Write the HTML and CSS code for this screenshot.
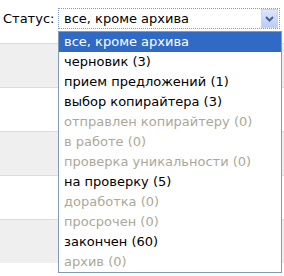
FILE: index.html
```html
<!DOCTYPE html>
<html>
	<head>
		<meta charset="UTF-8">
		<title></title>
		<link rel="stylesheet" href="styles.css">
	</head>
	<body>
		<div id="page">
			<div class="filter">
				<span class="label">Статус:</span>
				<div class="select">
					<span class="value">все, кроме архива</span>
					<span class="arrow">
						<svg width="9" height="6" viewBox="0 0 9 6"><path d="M1 1 L4.5 4.5 L8 1" fill="none" stroke="#4d6185" stroke-width="2"/></svg>
					</span>
				</div>
			</div>
			<div class="rows">
				<div class="row gray"></div>
				<div class="row"></div>
				<div class="row gray"></div>
				<div class="row"></div>
				<div class="row gray"></div>
			</div>
			<ul class="dropdown">
				<li class="on">все, кроме архива</li>
				<li>черновик (3)</li>
				<li>прием предложений (1)</li>
				<li>выбор копирайтера (3)</li>
				<li class="off">отправлен копирайтеру (0)</li>
				<li class="off">в работе (0)</li>
				<li class="off">проверка уникальности (0)</li>
				<li>на проверку (5)</li>
				<li class="off">доработка (0)</li>
				<li class="off">просрочен (0)</li>
				<li>закончен (60)</li>
				<li class="off">архив (0)</li>
			</ul>
		</div>
	</body>
</html>
```

FILE: styles.css
```css
* {margin: 0; padding: 0; border: none;}
ul, li {list-style: none;}
body {
	font-family: "DejaVu Sans", sans-serif;
	font-size: 13px;
	background: #fff;
	color: #000;
}
#page {
	position: relative;
	width: 284px;
	height: 276px;
	overflow: hidden;
}
.filter {
	display: flex;
	align-items: center;
	padding: 7px 0 0 3px;
	height: 23px;
}
.label {
	width: 55px;
}
.select {
	display: flex;
	align-items: center;
	width: 222px;
	height: 21px;
	border: 1px dotted #7f9db9;
	box-sizing: border-box;
	background: #fff;
}
.value {
	flex: 1;
	padding-left: 5px;
}
.arrow {
	display: flex;
	align-items: center;
	justify-content: center;
	width: 15px;
	height: 17px;
	margin-right: 1px;
	background: linear-gradient(#dce6fd, #b9cbf9);
	border: 1px solid #c3d3fd;
}
.rows {
	margin-top: 13px;
}
.row {
	height: 43px;
	border-top: 1px solid #dcdcdc;
}
.row.gray {
	background: #efefef;
}
.dropdown {
	position: absolute;
	left: 58px;
	top: 31px;
	width: 224px;
	border: 1px solid #7f9db9;
	background: #fff;
	box-sizing: border-box;
}
.dropdown li {
	height: 20px;
	line-height: 20px;
	padding-left: 5px;
	white-space: nowrap;
}
.dropdown li.on {
	background: #316ac5;
	color: #fff;
}
.dropdown li.off {
	color: #aca899;
}
```
